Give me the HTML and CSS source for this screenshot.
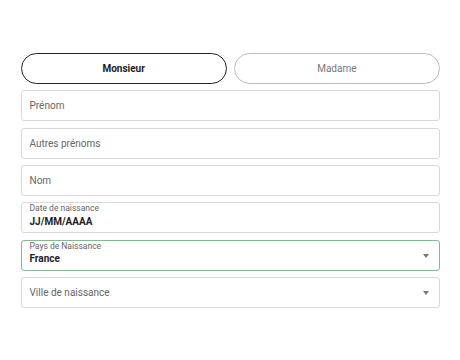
FILE: index.html
```html
<!DOCTYPE html>
<html lang="fr">
<head>
<meta charset="utf-8">
<link rel="stylesheet" href="styles.css">
</head>
<body>
<form class="form">
  <div class="civ">
    <button type="button" class="pill pill-on">Monsieur</button>
    <button type="button" class="pill">Madame</button>
  </div>
  <div class="field"><span class="ph">Prénom</span></div>
  <div class="field"><span class="ph">Autres prénoms</span></div>
  <div class="field"><span class="ph">Nom</span></div>
  <div class="field field-lab">
    <span class="lab">Date de naissance</span>
    <span class="val">JJ/MM/AAAA</span>
  </div>
  <div class="field field-lab field-focus field-sel">
    <div class="col">
      <span class="lab">Pays de Naissance</span>
      <span class="val">France</span>
    </div>
    <span class="caret"></span>
  </div>
  <div class="field field-sel">
    <span class="ph">Ville de naissance</span>
    <span class="caret"></span>
  </div>
</form>
</body>
</html>
```
FILE: styles.css
```css
html, body {
  margin: 0;
  padding: 0;
  background: #fff;
}
body {
  font-family: Roboto, "Liberation Sans", sans-serif;
  color: #222;
}
.form {
  width: 419.5px;
  margin: 53.3px 0 0 20.5px;
  display: flex;
  flex-direction: column;
  gap: 6.4px;
}
.civ {
  display: flex;
  gap: 7px;
}
.pill {
  flex: 1;
  height: 30.6px;
  border-radius: 16px;
  border: 1.2px solid #bdbdbd;
  background: #fff;
  font-family: Roboto, "Liberation Sans", sans-serif;
  font-size: 10px;
  color: #777;
  padding: 0;
}
.pill-on {
  border: 1.5px solid #222;
  color: #222;
  font-weight: 700;
}
.field {
  box-sizing: border-box;
  height: 31px;
  border: 1px solid #d9d9d9;
  border-radius: 3px;
  padding: 0 8px;
  display: flex;
  align-items: center;
  font-size: 10px;
}
.ph {
  color: #666;
}
.field-lab {
  flex-direction: column;
  align-items: flex-start;
  justify-content: flex-start;
  padding-top: 1px;
  gap: 2.8px;
}
.field-sel {
  justify-content: space-between;
}
.field-lab.field-sel {
  flex-direction: row;
  align-items: flex-start;
}
.field-lab.field-sel .caret {
  align-self: center;
}
.col {
  display: flex;
  flex-direction: column;
  gap: 2.2px;
}
.lab {
  font-size: 8.5px;
  color: #666;
  line-height: 9px;
}
.val {
  font-size: 10px;
  font-weight: 700;
  color: #222;
  line-height: 12px;
}
.field-focus {
  border-color: #74c287;
}
.caret {
  width: 0;
  height: 0;
  border-left: 3px solid transparent;
  border-right: 3px solid transparent;
  border-top: 4px solid #777;
  margin-right: 2px;
}
```
